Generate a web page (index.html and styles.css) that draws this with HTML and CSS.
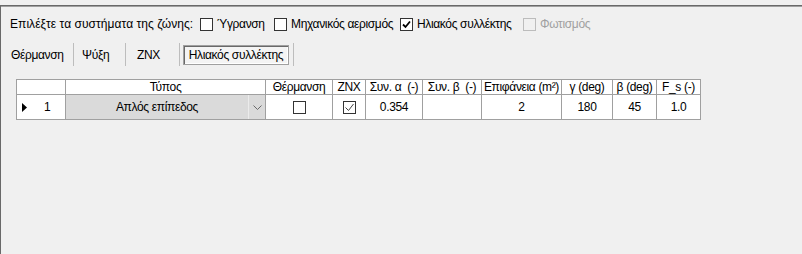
FILE: index.html
```html
<!DOCTYPE html>
<html lang="el">
<head>
<meta charset="utf-8">
<link rel="stylesheet" href="styles.css">
</head>
<body>
<div class="panel">
  <div class="systems">
    <span class="prompt">Επιλέξτε τα συστήματα της ζώνης:</span>
    <label class="opt opt-1"><span class="box"></span>Ύγρανση</label>
    <label class="opt opt-2"><span class="box"></span>Μηχανικός αερισμός</label>
    <label class="opt opt-3"><span class="box"><svg width="11" height="11" viewBox="0 0 11 11"><path d="M2 5.5 L4.5 8 L9 2.5" fill="none" stroke="#000" stroke-width="1.8"/></svg></span>Ηλιακός συλλέκτης</label>
    <label class="opt disabled"><span class="box"></span>Φωτισμός</label>
  </div>
  <div class="toolstrip">
    <span class="tbtn tb-1">Θέρμανση</span>
    <span class="sep"></span>
    <span class="tbtn tb-2">Ψύξη</span>
    <span class="sep"></span>
    <span class="tbtn tb-3">ZNX</span>
    <span class="sep sep-narrow"></span>
    <span class="tbtn pressed">Ηλιακός συλλέκτης</span>
    <span class="sep"></span>
  </div>
  <table class="grid">
    <colgroup>
      <col class="c-rh"><col class="c-type"><col class="c-th"><col class="c-znx"><col class="c-a"><col class="c-b"><col class="c-area"><col class="c-g"><col class="c-beta"><col class="c-fs">
    </colgroup>
    <thead>
      <tr>
        <th></th>
        <th>Τύπος</th>
        <th>Θέρμανση</th>
        <th>ZNX</th>
        <th>Συν. α&nbsp; (-)</th>
        <th>Συν. β&nbsp; (-)</th>
        <th>Επιφάνεια (m²)</th>
        <th>γ (deg)</th>
        <th>β (deg)</th>
        <th>F_s (-)</th>
      </tr>
    </thead>
    <tbody>
      <tr>
        <td class="rowhead"><span class="rh-inner"><svg class="cur" width="5" height="9" viewBox="0 0 5 9"><path d="M0 0 L5 4.5 L0 9 Z" fill="#000"/></svg><span class="rownum">1</span></span></td>
        <td class="combo-cell"><div class="combo"><span class="combo-text">Απλός επίπεδος</span><span class="combo-btn"><svg width="9" height="5" viewBox="0 0 9 5"><path d="M0.5 0.5 L4.5 4.5 L8.5 0.5" fill="none" stroke="#6a6a6a" stroke-width="1"/></svg></span></div></td>
        <td><span class="gbox"></span></td>
        <td><span class="gbox"><svg width="11" height="11" viewBox="0 0 11 11"><path d="M1.5 5.5 L4.5 8.5 L9.5 2" fill="none" stroke="#444" stroke-width="1"/></svg></span></td>
        <td>0.354</td>
        <td></td>
        <td>2</td>
        <td>180</td>
        <td>45</td>
        <td>1.0</td>
      </tr>
    </tbody>
  </table>
</div>
</body>
</html>
```

FILE: styles.css
```css
html, body {
  margin: 0;
  padding: 0;
  background: #f0f0f0;
}
body {
  font-family: "Liberation Sans", Arial, sans-serif;
  font-size: 12px;
  letter-spacing: -0.35px;
  color: #000;
  height: 254px;
  overflow: hidden;
}
.panel {
  margin-top: 5px;
  height: 249px;
  border-top: 1px solid #696969;
  border-left: 1px solid #696969;
  box-shadow: inset 0 1px 0 #a0a0a0;
  box-sizing: border-box;
  padding-left: 9px;
}
.systems {
  display: flex;
  align-items: center;
  height: 14px;
  margin-top: 11px;
  white-space: nowrap;
}
.prompt {
  width: 190px;
  letter-spacing: 0.05px;
}
.opt {
  display: flex;
  align-items: center;
}
.opt-1 { width: 74px; }
.opt-2 { width: 126px; }
.opt-3 { width: 123px; }
.box {
  width: 11px;
  height: 11px;
  border: 1px solid #333;
  background: #fff;
  margin-right: 4px;
  display: inline-flex;
}
.disabled { color: #a0a0a0; }
.disabled .box {
  border-color: #bcbcbc;
  background: #f0f0f0;
}
.toolstrip {
  display: flex;
  align-items: center;
  height: 23px;
  margin-top: 12px;
  margin-left: -6px;
  white-space: nowrap;
}
.tbtn {
  height: 20px;
  line-height: 20px;
  box-sizing: border-box;
}
.tb-1 { width: 65px; padding-left: 7px; }
.tb-2 { width: 43px; padding-left: 4px; }
.tb-3 { width: 46px; padding-left: 7px; }
.sep {
  width: 9px;
  height: 23px;
  display: flex;
  justify-content: center;
}
.sep::before {
  content: "";
  width: 1px;
  height: 23px;
  background: #bdbdbd;
}
.sep-narrow { width: 7px; }
.pressed {
  width: 106px;
  text-align: center;
  border: 1px solid #a0a0a0;
  box-shadow: inset 1px 1px 0 #696969, inset -1px -1px 0 #fff;
  background: #f4f4f4;
  line-height: 18px;
}
.grid {
  margin-top: 13px;
  margin-left: 6px;
  border-collapse: collapse;
  table-layout: fixed;
  width: 684px;
  background: #fff;
}
.c-rh { width: 49px; }
.c-type { width: 200px; }
.c-th { width: 67px; }
.c-znx { width: 33px; }
.c-a { width: 57px; }
.c-b { width: 59px; }
.c-area { width: 80px; }
.c-g { width: 51px; }
.c-beta { width: 44px; }
.c-fs { width: 44px; }
.grid th, .grid td {
  border: 1px solid #a0a0a0;
  padding: 0;
  text-align: center;
  white-space: nowrap;
  overflow: hidden;
  font-weight: normal;
}
.grid th {
  height: 14px;
  line-height: 14px;
}
.grid td {
  height: 24px;
  line-height: 24px;
}
.rh-inner {
  display: flex;
  align-items: center;
  padding-left: 5px;
}
.rownum { margin-left: 17px; }
.combo-cell { padding: 0; }
.combo {
  display: flex;
  height: 24px;
  background: #dadada;
}
.combo-text {
  flex: 1;
  text-align: center;
}
.combo-btn {
  width: 16px;
  border-left: 1px solid #ebebeb;
  display: flex;
  align-items: center;
  justify-content: center;
}
.gbox {
  display: inline-flex;
  width: 11px;
  height: 11px;
  border: 1px solid #333;
  background: #fff;
  vertical-align: middle;
}
```
